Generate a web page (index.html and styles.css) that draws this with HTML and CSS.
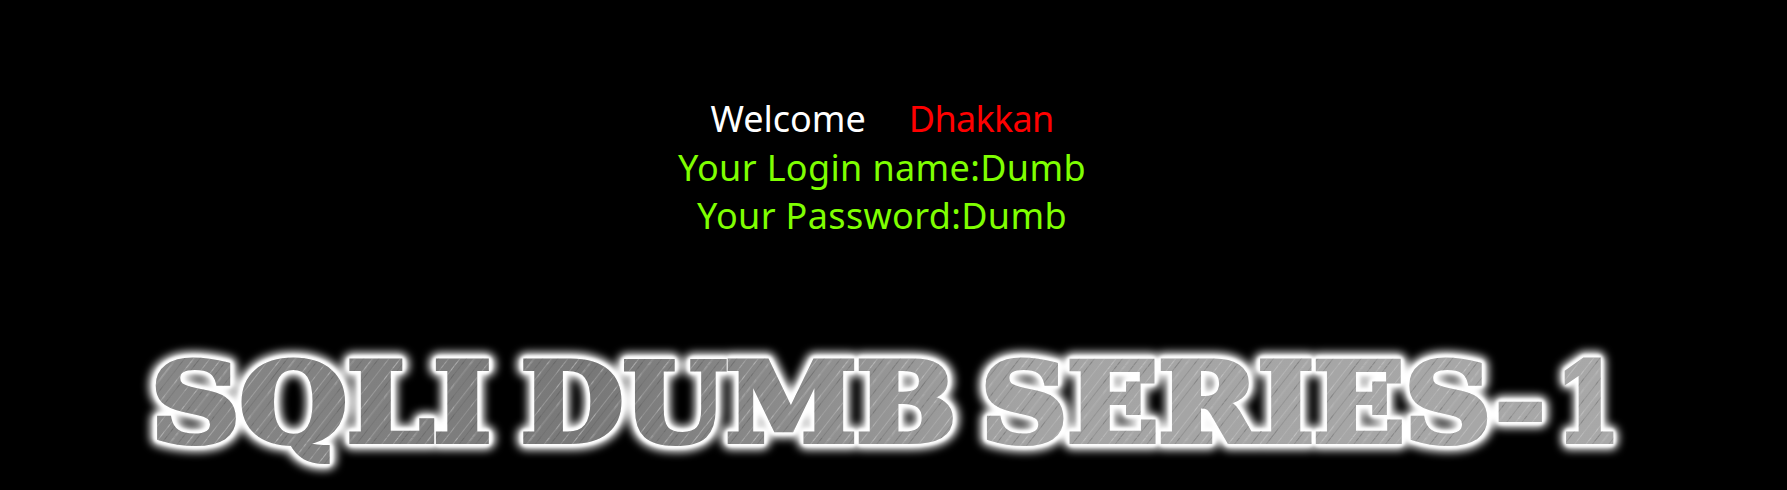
FILE: index.html
```html
<!DOCTYPE html>
<html lang="en">
<head>
<meta charset="utf-8">
<title>Less-1</title>
<link rel="stylesheet" href="styles.css">
</head>
<body>
<main class="page">
  <div class="message">
    <div class="line"><span class="welcome">Welcome</span><span class="user">Dhakkan</span></div>
    <div class="line lime">Your Login name:Dumb</div>
    <div class="line lime">Your Password:Dumb</div>
  </div>
  <svg class="logo" width="1787" height="165" viewBox="0 0 1787 165" role="img" aria-label="SQLI DUMB SERIES-1">
    <defs>
      <linearGradient id="metal" gradientUnits="userSpaceOnUse" x1="150" y1="0" x2="1620" y2="0">
        <stop offset="0" stop-color="#888888"/>
        <stop offset="0.3" stop-color="#787878"/>
        <stop offset="0.6" stop-color="#a4a4a4"/>
        <stop offset="1" stop-color="#a8a8a8"/>
      </linearGradient>
      <pattern id="scratch" patternUnits="userSpaceOnUse" width="47" height="47" patternTransform="rotate(-52)">
        <rect x="0" y="3" width="47" height="1" fill="#d8d8d8" opacity=".3"/>
        <rect x="0" y="8" width="47" height="1" fill="#444" opacity=".2"/>
        <rect x="0" y="14" width="47" height="1.6" fill="#cfcfcf" opacity=".2"/>
        <rect x="0" y="21" width="47" height="1" fill="#555" opacity=".22"/>
        <rect x="0" y="28" width="47" height="1.2" fill="#ddd" opacity=".25"/>
        <rect x="0" y="33" width="47" height="1" fill="#444" opacity=".18"/>
        <rect x="0" y="41" width="47" height="1" fill="#ddd" opacity=".2"/>
      </pattern>
      <filter id="glow" x="-5%" y="-30%" width="110%" height="160%">
        <feGaussianBlur stdDeviation="4.5"/>
      </filter>
      <filter id="soft" x="-5%" y="-30%" width="110%" height="160%">
        <feGaussianBlur stdDeviation="1.5"/>
      </filter>
      <g id="title">
        <text x="151" y="110" textLength="340" lengthAdjust="spacingAndGlyphs">SQLI</text>
        <text x="521" y="110" textLength="435" lengthAdjust="spacingAndGlyphs">DUMB</text>
        <text x="981" y="110" textLength="564" lengthAdjust="spacingAndGlyphs">SERIES-</text>
        <text x="1556" y="110" textLength="64" lengthAdjust="spacingAndGlyphs">1</text>
      </g>
    </defs>
    <use href="#title" class="halo" filter="url(#glow)"/>
    <use href="#title" class="rim" filter="url(#soft)"/>
    <use href="#title" class="fill-metal"/>
    <use href="#title" class="fill-scratch"/>
  </svg>
</main>
</body>
</html>
```
FILE: styles.css
```css
html, body {
  margin: 0;
  background: #000;
}
.page {
  display: flex;
  flex-direction: column;
  align-items: center;
  width: 1787px;
  height: 490px;
  overflow: hidden;
  padding-top: 95px;
  box-sizing: border-box;
}
.message {
  margin-right: 23px;
  font-family: "Noto Sans", "Open Sans", sans-serif;
  font-size: 36px;
  line-height: 48.5px;
  text-align: center;
}
.welcome { color: #fff; margin-right: 43px; }
.user { color: #f00; letter-spacing: -0.7px; }
.lime { color: #7fff00; letter-spacing: 0.35px; }
.logo {
  display: block;
  margin-top: 90px;
  flex: none;
  font-family: "DejaVu Serif", serif;
  font-weight: 700;
  font-size: 109px;
}
.halo { fill: #fff; stroke: #fff; stroke-width: 18px; stroke-linejoin: round; }
.rim { fill: #fff; stroke: #fff; stroke-width: 12px; stroke-linejoin: round; }
.fill-metal { fill: url(#metal); stroke: url(#metal); stroke-width: 6px; stroke-linejoin: miter; }
.fill-scratch { fill: url(#scratch); stroke: url(#scratch); stroke-width: 6px; stroke-linejoin: miter; }
```
